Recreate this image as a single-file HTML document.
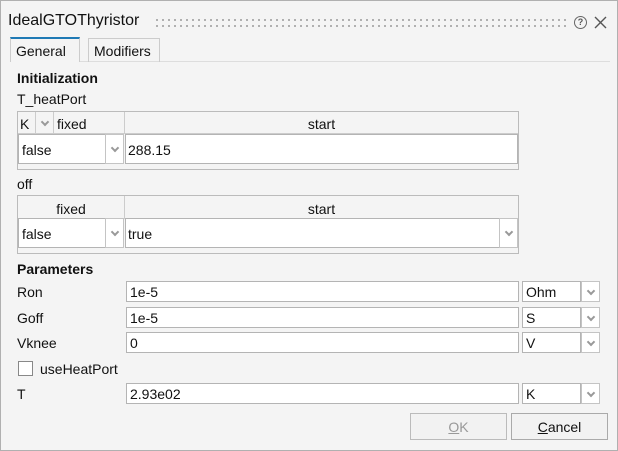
<html><head><style>
body{margin:0;width:618px;height:450px;background:#f4f4f4;font-family:"Liberation Sans",Arial,sans-serif;font-size:14px;color:#111;position:relative;overflow:hidden}
.a{position:absolute}
.box{position:absolute;background:#fff;border:1px solid #b4b4b4;box-sizing:border-box}
.t{position:absolute;line-height:16px}
.dd{position:absolute;box-sizing:border-box;border:1px solid #c4c4c4;background:#fff}
.dd:after{content:"";position:absolute;left:50%;top:50%;margin:-4px 0 0 -3px;width:4px;height:4px;border-right:2px solid #999;border-bottom:2px solid #999;transform:rotate(45deg)}
</style></head><body>
<div class="a" style="left:0;top:0;width:616px;height:449px;border:1px solid #b0b0b0"></div>
<div class="t" style="left:8px;top:13px;font-size:16px">IdealGTOThyristor</div>
<div class="a" style="left:154px;top:17px;width:412px;height:12px;background-image:radial-gradient(circle,#aaa 1px,transparent 1.2px);background-size:6px 6px"></div>
<div class="a" style="left:574px;top:16px;width:11px;height:11px;border:1.3px solid #666;border-radius:50%;font-size:9px;line-height:11px;text-align:center;color:#555;font-weight:bold">?</div>
<svg class="a" style="left:594px;top:16px" width="13" height="13"><path d="M1 1L12 12M12 1L1 12" stroke="#555" stroke-width="1.4"/></svg>
<div class="a" style="left:10px;top:61px;width:600px;height:1px;background:#ddd"></div>
<div class="a" style="left:10px;top:37px;width:70px;height:25px;background:#f4f4f4;border:1px solid #ccc;border-top:2px solid #1f7ab5;border-bottom:none;box-sizing:border-box"></div>
<div class="t" style="left:16px;top:43px">General</div>
<div class="a" style="left:88px;top:38px;width:72px;height:24px;border:1px solid #ccc;border-bottom:none;box-sizing:border-box"></div>
<div class="t" style="left:94px;top:43px">Modifiers</div>
<div class="t" style="left:17px;top:70px;font-weight:bold">Initialization</div>
<div class="t" style="left:17px;top:91px">T_heatPort</div>
<div class="a" style="left:17px;top:111px;width:502px;height:59px;border:1px solid #bbb;box-sizing:border-box"></div>
<div class="a" style="left:18px;top:133px;width:500px;height:1px;background:#ccc"></div>
<div class="a" style="left:35px;top:112px;width:1px;height:21px;background:#ccc"></div>
<div class="a" style="left:53px;top:112px;width:1px;height:21px;background:#ccc"></div>
<div class="a" style="left:124px;top:112px;width:1px;height:21px;background:#ccc"></div>
<div class="t" style="left:20px;top:116px">K</div>
<div class="dd" style="left:36px;top:112px;width:17px;height:21px;border:none;background:none"></div>
<div class="t" style="left:57px;top:116px">fixed</div>
<div class="t" style="left:125px;top:116px;width:393px;text-align:center">start</div>
<div class="box" style="left:18px;top:134px;width:88px;height:30px"></div>
<div class="dd" style="left:105px;top:134px;width:19px;height:30px"></div>
<div class="t" style="left:22px;top:142px">false</div>
<div class="box" style="left:125px;top:134px;width:393px;height:30px"></div>
<div class="t" style="left:128px;top:142px">288.15</div>
<div class="t" style="left:17px;top:176px">off</div>
<div class="a" style="left:17px;top:195px;width:502px;height:59px;border:1px solid #bbb;box-sizing:border-box"></div>
<div class="a" style="left:18px;top:218px;width:500px;height:1px;background:#ccc"></div>
<div class="a" style="left:124px;top:196px;width:1px;height:22px;background:#ccc"></div>
<div class="t" style="left:18px;top:201px;width:106px;text-align:center">fixed</div>
<div class="t" style="left:125px;top:201px;width:393px;text-align:center">start</div>
<div class="box" style="left:18px;top:218px;width:88px;height:30px"></div>
<div class="dd" style="left:105px;top:218px;width:19px;height:30px"></div>
<div class="t" style="left:22px;top:226px">false</div>
<div class="box" style="left:125px;top:218px;width:375px;height:30px"></div>
<div class="dd" style="left:499px;top:218px;width:19px;height:30px"></div>
<div class="t" style="left:128px;top:226px">true</div>
<div class="t" style="left:17px;top:261px;font-weight:bold">Parameters</div>
<div class="t" style="left:17px;top:284px">Ron</div>
<div class="box" style="left:126px;top:281px;width:393px;height:21px"></div><div class="t" style="left:130px;top:284px">1e-5</div>
<div class="box" style="left:522px;top:281px;width:59px;height:21px"></div><div class="t" style="left:526px;top:284px">Ohm</div><div class="dd" style="left:581px;top:281px;width:19px;height:21px"></div>
<div class="t" style="left:17px;top:310px">Goff</div>
<div class="box" style="left:126px;top:307px;width:393px;height:21px"></div><div class="t" style="left:130px;top:310px">1e-5</div>
<div class="box" style="left:522px;top:307px;width:59px;height:21px"></div><div class="t" style="left:526px;top:310px">S</div><div class="dd" style="left:581px;top:307px;width:19px;height:21px"></div>
<div class="t" style="left:17px;top:335px">Vknee</div>
<div class="box" style="left:126px;top:332px;width:393px;height:21px"></div><div class="t" style="left:130px;top:335px">0</div>
<div class="box" style="left:522px;top:332px;width:59px;height:21px"></div><div class="t" style="left:526px;top:335px">V</div><div class="dd" style="left:581px;top:332px;width:19px;height:21px"></div>
<div class="box" style="left:18px;top:361px;width:15px;height:15px;border-color:#888"></div>
<div class="t" style="left:40px;top:361px">useHeatPort</div>
<div class="t" style="left:17px;top:386px">T</div>
<div class="box" style="left:126px;top:383px;width:393px;height:21px"></div><div class="t" style="left:130px;top:386px">2.93e02</div>
<div class="box" style="left:522px;top:383px;width:59px;height:21px"></div><div class="t" style="left:526px;top:386px">K</div><div class="dd" style="left:581px;top:383px;width:19px;height:21px"></div>
<div class="a" style="left:410px;top:413px;width:97px;height:27px;border:1px solid #bbb;box-sizing:border-box;background:#f2f2f2"></div>
<div class="t" style="left:410px;top:419px;width:97px;text-align:center;color:#999"><u>O</u>K</div>
<div class="a" style="left:511px;top:413px;width:97px;height:27px;border:1px solid #aaa;box-sizing:border-box;background:#f2f2f2"></div>
<div class="t" style="left:511px;top:419px;width:97px;text-align:center"><u>C</u>ancel</div>
</body></html>
